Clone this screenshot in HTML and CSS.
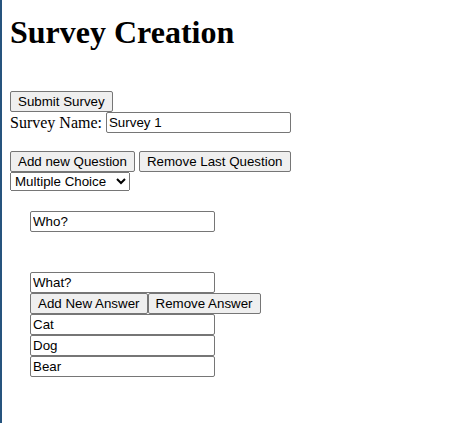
FILE: index.html
```html
<!DOCTYPE html>
<html>
<head>
<meta charset="utf-8">
<title>Survey Creation</title>
<link rel="stylesheet" href="styles.css">
</head>
<body>
<h1 class="title">Survey Creation</h1>
<div class="toolbar"><button class="btn">Submit Survey</button></div>
<div class="name-row">Survey Name: <input class="field" type="text" value="Survey 1"></div>
<div class="question-bar"><button class="btn">Add new Question</button> <button class="btn">Remove Last Question</button></div>
<div class="type-row"><select class="picker"><option>Multiple Choice</option></select></div>
<div class="question">
  <input class="field block" type="text" value="Who?">
</div>
<div class="question">
  <input class="field block" type="text" value="What?">
  <div class="answer-bar"><button class="btn">Add New Answer</button><button class="btn">Remove Answer</button></div>
  <input class="field block" type="text" value="Cat">
  <input class="field block" type="text" value="Dog">
  <input class="field block" type="text" value="Bear">
</div>
</body>
</html>
```
FILE: styles.css
```css
html {
  border-left: 2px solid #26547e;
  box-sizing: border-box;
  height: 100%;
}
body {
  margin: 0 8px 8px;
  font-family: "Liberation Serif", "Times New Roman", serif;
  font-size: 16px;
}
.title {
  font-size: 32px;
  font-weight: bold;
  margin: 14px 0 40px;
  line-height: 37px;
}
.toolbar {
  height: 21px;
}
.name-row {
  height: 21px;
  display: flex;
  align-items: center;
  gap: 4px;
  margin-bottom: 18px;
}
.btn, .field, .picker {
  font-family: "Liberation Sans", Arial, sans-serif;
  font-size: 13.333px;
  margin: 0;
}
.btn {
  height: 21px;
  padding: 1px 7px;
  border: 1px solid #767676;
  border-radius: 2px;
  background: #efefef;
  color: #000;
}
.question-bar {
  display: flex;
  gap: 4px;
  height: 21px;
}
.type-row {
  height: 19px;
}
.picker {
  width: 120px;
  height: 19px;
}
.field {
  width: 185px;
  height: 21px;
  box-sizing: border-box;
  padding: 1px 2px;
  border: 1px solid #767676;
  border-radius: 2px;
}
.block {
  display: block;
}
.question {
  padding: 20px;
}
.answer-bar {
  display: flex;
  height: 21px;
}
```
